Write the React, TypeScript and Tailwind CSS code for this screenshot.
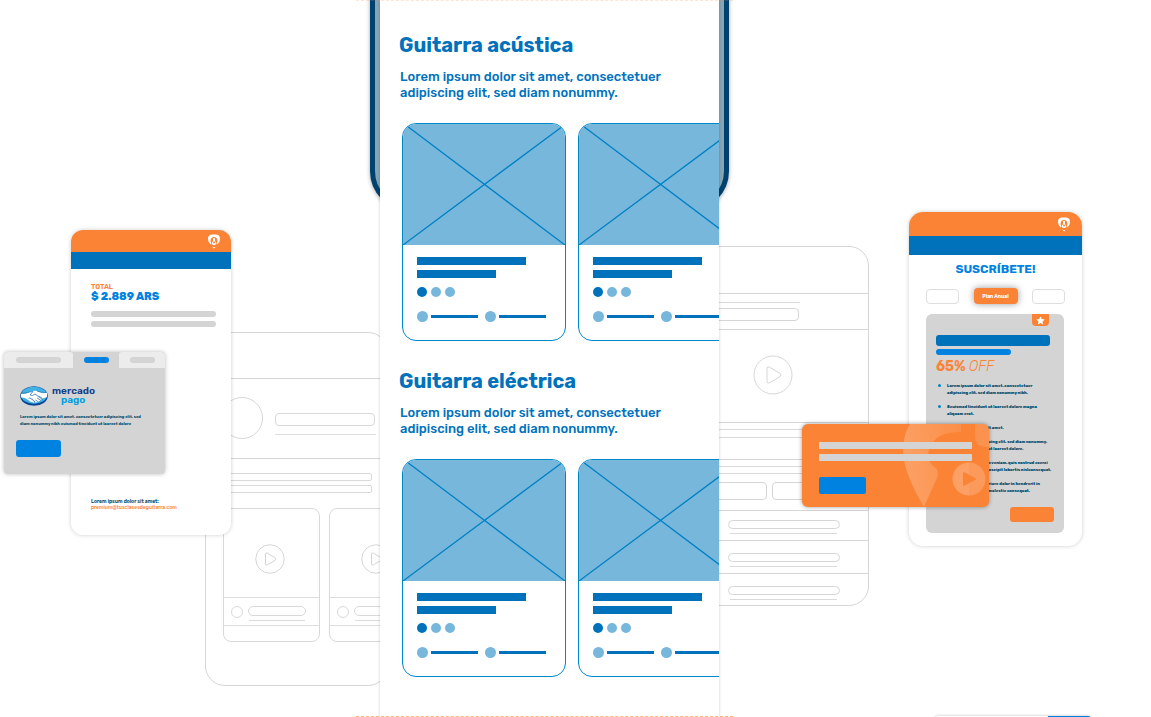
import React from "react";

function Heading({ title }: { title: string }) {
  return (
    <header className="pl-5">
      <h2 className="-ml-px font-['Rubik','Inter',sans-serif] text-[20px] font-bold leading-6 text-[#0072bc]">{title}</h2>
      <p className="mt-3 w-[280px] font-['Rubik','Roboto',sans-serif] text-[13px] font-medium leading-4 text-[#0072bc]">
        Lorem ipsum dolor sit amet, consectetuer adipiscing elit, sed diam nonummy.
      </p>
    </header>
  );
}

function Meta() {
  return (
    <div className="flex items-center gap-[3px]">
      <i className="size-[11px] rounded-full bg-[#77b7dc]" />
      <i className="h-[3px] w-[47px] bg-[#0072bc]" />
    </div>
  );
}

function CourseCard() {
  return (
    <article className="h-[218px] w-[164px] shrink-0 overflow-hidden rounded-[14px] border border-[#0087c8] bg-white">
      <svg className="block h-[121px] w-full bg-[#77b7dc]" viewBox="0 0 162 121" preserveAspectRatio="none" aria-hidden="true">
        <path d="M4 2L162 121M160 2L0 121" stroke="#0081c4" strokeWidth="1.3" fill="none" />
      </svg>
      <div className="flex flex-col px-[14px] pt-3">
        <i className="h-2 w-[109px] bg-[#0072bc]" />
        <i className="mt-[5px] h-2 w-[79px] bg-[#0072bc]" />
        <div className="mt-[9px] flex gap-1">
          <i className="size-[10px] rounded-full bg-[#0072bc]" />
          <i className="size-[10px] rounded-full bg-[#77b7dc]" />
          <i className="size-[10px] rounded-full bg-[#77b7dc]" />
        </div>
        <div className="mt-[14px] flex gap-[7px]">
          <Meta />
          <Meta />
        </div>
      </div>
    </article>
  );
}

function Course({ title }: { title: string }) {
  return (
    <section className="h-[336px] pt-[33px]">
      <Heading title={title} />
      <div className="mt-[22px] flex gap-3 overflow-hidden pl-[22px]">
        <CourseCard />
        <CourseCard />
      </div>
    </section>
  );
}

function Play({ className }: { className: string }) {
  return (
    <svg className={className} viewBox="0 0 40 40" fill="none" stroke="#d6d6d6" aria-hidden="true">
      <circle cx="20" cy="20" r="19" vectorEffect="non-scaling-stroke" />
      <path d="M14 13.500V26.500Q14 29 16.500 27.800L27 21.700Q29 20 27 18.400L16.500 12.200Q14 11 14 13.500Z" vectorEffect="non-scaling-stroke" />
    </svg>
  );
}

function PickLogo() {
  return (
    <svg className="h-[15px] w-3" viewBox="0 0 24 30" aria-hidden="true">
      <path d="M12 1C5 0 0 2 0 9c0 5 2 9 6 12 1-2 0-4-1-7 0-5 3-8 7-8s7 3 7 8c-1 3-2 5-1 7 4-3 6-7 6-12 0-7-5-9-12-8z" fill="#fff" />
      <path d="M10 8h4v6l3 5-3 3h-4l-3-3 3-5z" fill="#fff" />
      <circle cx="12" cy="17" r="2" fill="#fb8335" />
      <path d="M8 25q4 2 8 0l-4 4z" fill="#fff" />
    </svg>
  );
}

function OutlineLesson() {
  return (
    <div className="w-[97px] shrink-0 rounded-[8px] border border-[#d9d9d9]">
      <div className="flex h-[88px] items-center justify-center pr-1 pt-3">
        <Play className="size-[30px]" />
      </div>
      <div className="flex h-[29px] gap-[5px] border-y border-[#dedede] pl-[7px] pt-2">
        <i className="size-3 rounded-full border border-[#d9d9d9]" />
        <div>
          <i className="block h-[10px] w-[58px] rounded-full border border-[#d9d9d9]" />
          <i className="mx-px mt-1 block h-px bg-[#dcdcdc]" />
        </div>
      </div>
      <div className="h-[15px]" />
    </div>
  );
}

function ProfileOutline() {
  return (
    <div className="absolute right-[-8px] top-[332px] h-[354px] w-[183px] overflow-hidden rounded-[20px] border border-[#d6d6d6] bg-white">
      <div className="h-[46px] border-b border-[#d6d6d6]" />
      <div className="flex h-20 gap-3 border-b border-[#d6d6d6] pl-[15px] pt-[18px]">
        <i className="size-[42px] shrink-0 rounded-full border border-[#d6d6d6]" />
        <div className="w-[101px] pt-4">
          <i className="block h-[13px] w-[100px] rounded-[4px] border border-[#d9d9d9]" />
          <i className="mt-2 block h-px bg-[#dedede]" />
        </div>
      </div>
      <div className="flex flex-col gap-1 pr-[15px] pt-[14px]">
        <i className="h-2 rounded-[2px] border border-[#d9d9d9]" />
        <i className="h-2 rounded-[2px] border border-[#d9d9d9]" />
      </div>
      <div className="mt-[15px] flex gap-[9px] pl-[17px]">
        <OutlineLesson />
        <OutlineLesson />
      </div>
    </div>
  );
}

function PaymentPhone() {
  return (
    <article className="absolute right-[149px] top-[230px] h-[305px] w-40 overflow-hidden rounded-[12px] bg-white shadow-[0_0_4px_#0003]">
      <div className="flex h-[22px] items-center justify-end bg-[#fb8335] pr-[11px]">
        <PickLogo />
      </div>
      <div className="h-[17px] bg-[#0072bc]" />
      <div className="px-5 pt-[14px]">
        <p className="text-[7px] font-semibold leading-2 text-[#fb8335]">TOTAL</p>
        <p className="text-[11px] font-extrabold leading-3 text-[#0082e0]">$ 2.889 ARS</p>
        <i className="mt-2 block h-[6px] w-[125px] rounded-[3px] bg-[#d4d4d4]" />
        <i className="mt-1 block h-[6px] w-[125px] rounded-[3px] bg-[#d4d4d4]" />
        <div className="mt-[171px] whitespace-nowrap text-[5px] leading-[6px]">
          <p className="font-semibold text-[#004b6e]">Lorem ipsum dolor sit amet:</p>
          <a href="mailto:premium@tusclasesdeguitarra.com" className="block font-medium text-[#fb8335]">
            premium@tusclasesdeguitarra.com
          </a>
        </div>
      </div>
    </article>
  );
}

function MercadoPago() {
  return (
    <div className="flex items-center gap-1">
      <svg className="h-5 w-7" viewBox="0 0 56 40" aria-hidden="true">
        <ellipse cx="28" cy="20" rx="27.500" ry="19.500" fill="#0a4596" />
        <ellipse cx="28" cy="18.500" rx="26" ry="17" fill="#3fb1e5" />
        <path d="M2 16q11 0 17-4 9-4 15-2 11 5 20 3v9q-8 2-13 6-5 6-12 5-7 1-14-6-6-5-13-4z" fill="#fff" />
        <path d="M2 14q11 1 17-2l7-1-6 7q5 3 10-2l15 11M17 25q4-3 5 1 4-1 4 3 4 0 3 4M31 28l6 4M34 24l7 4M37 20l8 5M54 13q-9 2-20-3" fill="none" stroke="#2870ad" strokeWidth="1.500" />
      </svg>
      <p className="text-[10px] font-semibold leading-[9px] text-[#123f8c]">
        mercado
        <br />
        <span className="ml-[9px] text-[#009ee3]">pago</span>
      </p>
    </div>
  );
}

function PaymentMethod() {
  return (
    <article className="absolute right-[215px] top-[352px] h-[122px] w-[161px] overflow-hidden rounded-[4px] bg-[#d4d4d4] shadow-[0_0_4px_#0004]">
      <div className="flex h-4 bg-[#d4d4d4]">
        <div className="flex w-[69px] items-center justify-center rounded-t-[3px] bg-[#ececec]">
          <i className="h-[6px] w-[45px] rounded-full bg-[#d4d4d4]" />
        </div>
        <div className="flex w-[46px] items-center justify-center">
          <i className="h-[6px] w-[25px] rounded-full bg-[#0082e0]" />
        </div>
        <div className="flex flex-1 items-center justify-center rounded-t-[3px] bg-[#ececec]">
          <i className="h-[6px] w-[25px] rounded-full bg-[#d4d4d4]" />
        </div>
      </div>
      <div className="pl-4 pt-[18px]">
        <MercadoPago />
        <p className="mt-[7px] whitespace-nowrap text-[4px] font-bold leading-[7px] text-[#004b6e]">
          Lorem ipsum dolor sit amet, consectetuer adipiscing elit, sed
          <br />
          diam nonummy nibh euismod tincidunt ut laoreet dolore
        </p>
      </div>
      <button type="button" aria-label="Pagar" className="ml-3 mt-[13px] block h-[17px] w-[45px] rounded-[3px] bg-[#0082e0]" />
    </article>
  );
}

function OutlineRow() {
  return (
    <>
      <i className="block h-[9px] w-28 rounded-full border border-[#d6d6d6]" />
      <i className="ml-[2px] mt-1 block h-px w-[107px] bg-[#dadada]" />
    </>
  );
}

function VideoOutline() {
  return (
    <div className="absolute left-[-20px] top-[246px] h-[360px] w-[170px] overflow-hidden rounded-[20px] border border-[#d6d6d6] bg-white">
      <div className="h-[47px] border-b border-[#d6d6d6]" />
      <div className="h-9 border-b border-[#d6d6d6] pt-2">
        <i className="block h-px w-[100px] bg-[#dadada]" />
        <i className="mt-[5px] block h-[13px] w-[99px] rounded-[4px] border border-[#d6d6d6]" />
      </div>
      <div className="flex h-[93px] border-b border-[#d6d6d6] pl-[53px] pt-[25px]">
        <Play className="size-10" />
      </div>
      <div className="h-[37px] border-b border-[#d6d6d6] pt-[6px]">
        <i className="block h-[9px] border-y border-[#dadada]" />
      </div>
      <div className="h-[50px] pt-[6px]">
        <i className="block h-2 border-y border-[#dadada]" />
        <div className="mt-2 flex gap-[5px]">
          <i className="h-[18px] w-[67px] shrink-0 rounded-[4px] border border-[#d6d6d6]" />
          <i className="h-[18px] w-[67px] shrink-0 rounded-[4px] border border-[#d6d6d6]" />
        </div>
      </div>
      <div className="h-[30px] border-t border-[#d6d6d6] pl-7 pt-[9px]">
        <OutlineRow />
      </div>
      <div className="h-[33px] border-t border-[#d6d6d6] pl-7 pt-3">
        <OutlineRow />
      </div>
      <div className="h-[33px] border-t border-[#d6d6d6] pl-7 pt-3">
        <OutlineRow />
      </div>
    </div>
  );
}

const benefits = [
  ["Lorem ipsum dolor sit amet, consectetuer", "adipiscing elit, sed diam nonummy nibh."],
  ["Seuismod tincidunt ut laoreet dolore magna", "aliquam erat."],
  ["Lorem ipsum dolor sit amet."],
  ["Consectetuer adipiscing elit, sed diam nonummy.", "Seuismod tincidunt ut laoreet dolore."],
  ["Ut wisi enim ad minim veniam, quis nostrud exerci", "tation ullamcorper suscipit lobortis nislconsequat."],
  ["Duis autem vel eum iriure dolor in hendrerit in", "vulputate velit esse molestie consequat."],
];

function SubscribePhone() {
  return (
    <article className="absolute left-[190px] top-[212px] h-[334px] w-[173px] overflow-hidden rounded-[14px] bg-white shadow-[0_0_4px_#0003]">
      <div className="flex h-6 items-center justify-end bg-[#fb8335] pr-3">
        <PickLogo />
      </div>
      <div className="h-[19px] bg-[#0072bc]" />
      <h2 className="mt-2 text-center text-[12px] font-bold leading-3 text-[#0082e0]">SUSCRÍBETE!</h2>
      <div className="mt-[13px] flex items-center justify-between px-[17px]">
        <button type="button" aria-label="Plan mensual" className="h-[15px] w-[33px] rounded-[4px] border border-[#dedede]" />
        <button type="button" className="h-4 w-11 rounded-[4px] bg-[#fb8335] text-[5px] font-bold leading-4 text-white shadow-[0_0_7px_#0006]">
          Plan Anual
        </button>
        <button type="button" aria-label="Otro plan" className="h-[15px] w-[33px] rounded-[4px] border border-[#dedede]" />
      </div>
      <div className="ml-[17px] mr-[18px] mt-[10px] h-[219px] rounded-[6px] bg-[#d4d4d4] px-[10px]">
        <div className="flex justify-end pr-[5px]">
          <div className="flex h-3 w-[17px] items-center justify-center rounded-b-[4px] bg-[#fb8335]">
            <svg className="size-[9px]" viewBox="0 0 24 24" fill="#fff" aria-hidden="true">
              <path d="M12 1l3.400 7.300 8 .9-6 5.400 1.700 7.900L12 18.600l-7.100 3.900 1.700-7.900-6-5.400 8-.9z" />
            </svg>
          </div>
        </div>
        <i className="mt-[9px] block h-[11px] w-[114px] rounded-[3px] bg-[#0072bc]" />
        <i className="mt-[3px] block h-[6px] w-[75px] rounded-[3px] bg-[#0082e0]" />
        <p className="mt-1 whitespace-nowrap text-[14px] leading-4 text-[#fb8335]">
          <strong>65%</strong> <em className="font-light">OFF</em>
        </p>
        <ul className="mt-[7px] flex flex-col gap-[7px] text-[4px] font-extrabold leading-[7px] text-[#004b6e]">
          {benefits.map((lines) => (
            <li key={lines[0]} className="flex gap-[6px] whitespace-nowrap pl-[2px]">
              <i className="mt-[2px] size-[3px] shrink-0 rounded-full bg-[#0087c8]" />
              <span>
                {lines.map((line) => (
                  <span key={line} className="block">{line}</span>
                ))}
              </span>
            </li>
          ))}
        </ul>
        <button type="button" aria-label="Suscribirme" className="ml-auto mt-[13px] block h-[15px] w-11 rounded-[3px] bg-[#fb8335]" />
      </div>
    </article>
  );
}

function PromoCard() {
  return (
    <article className="absolute left-[83px] top-[424px] h-[83px] w-[187px] overflow-hidden rounded-[6px] bg-[#fb8335] shadow-[0_0_4px_#0006]">
      <svg className="absolute right-0 top-0 h-[83px] w-[88px]" viewBox="0 0 88 83" aria-hidden="true">
        <defs>
          <linearGradient id="pin" x1="0" x2="1" y1="0.500" y2="0.300">
            <stop offset="0" stopColor="#fff" stopOpacity=".24" />
            <stop offset="1" stopColor="#fff" stopOpacity=".1" />
          </linearGradient>
        </defs>
        <path d="M9 0H60V8Q40 7 32 18 25 27 28 36 30 41 35 44 38 47 36 54L23 83Q6 54 3 36 0 14 9 0z" fill="url(#pin)" />
        <path d="M74 0h14v23h-3q-11 0-11-11z" fill="#fff" opacity=".13" />
        <path d="M68 38.500a16.500 16.500 0 0 0 0 33z" fill="#fff" opacity=".24" />
        <path d="M68 38.500a16.500 16.500 0 0 1 0 33z" fill="#fff" opacity=".19" />
        <path d="M62 49.500q0-2 2-1l10 5.500q2 1 0 2l-10 5.500q-2 1-2-1z" fill="#fb8335" />
      </svg>
      <div className="relative pl-[17px] pt-[18px]">
        <i className="block h-[7px] w-[153px] rounded-[1px] bg-[#d4d4d4]" />
        <i className="mt-[5px] block h-[7px] w-[153px] rounded-[1px] bg-[#d4d4d4]" />
        <button type="button" aria-label="Ver más" className="mt-4 block h-[17px] w-[47px] rounded-[2px] bg-[#0082e0]" />
      </div>
    </article>
  );
}

export default function App() {
  return (
    <main className="relative grid h-screen min-h-[717px] grid-cols-[minmax(0,380fr)_339px_minmax(0,432fr)] overflow-hidden bg-white font-['Rubik','Inter',sans-serif]">
      <div className="relative">
        <ProfileOutline />
        <PaymentPhone />
        <PaymentMethod />
      </div>
      <div className="relative z-10">
        <div className="absolute -inset-x-[10px] -top-10 h-[251px] rounded-b-[40px] border-[5px] border-[#00426f] bg-[#86a5b5] shadow-[0_1px_4px_#0005]" />
        <div className="relative h-full bg-white shadow-[0_0_3px_#0003]">
          <Course title="Guitarra acústica" />
          <Course title="Guitarra eléctrica" />
        </div>
        <i className="absolute -left-6 top-0 h-px w-[377px] border-t border-dashed border-[#fb8335]/20" />
        <i className="absolute -left-6 bottom-0 h-px w-[377px] border-t border-dashed border-[#fb8335]/60" />
      </div>
      <div className="relative">
        <VideoOutline />
        <SubscribePhone />
        <PromoCard />
        <div className="absolute left-[216px] top-[716px] flex h-10 w-[156px] justify-end overflow-hidden rounded-t-[3px] bg-white shadow-[0_0_3px_#0004]">
          <i className="w-[43px] bg-[#0082e0]" />
        </div>
      </div>
    </main>
  );
}
